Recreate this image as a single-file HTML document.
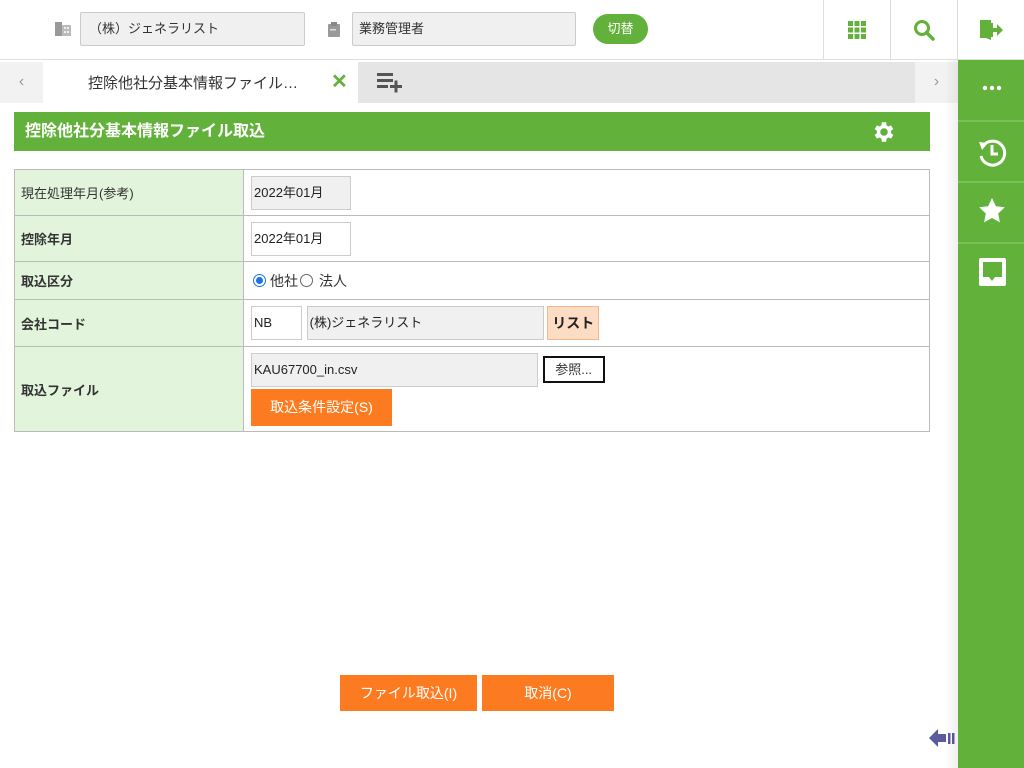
<!DOCTYPE html>
<html><head><meta charset="utf-8"><style>
*{box-sizing:border-box;margin:0;padding:0}
body{width:1024px;height:768px;position:relative;overflow:hidden;background:#fff;font-family:"Liberation Sans","Noto Sans CJK JP",sans-serif;font-size:13px;color:#333}
.a{position:absolute}
.box{position:absolute;background:#f0f0f0;border:1px solid #ccc;border-radius:2px;padding-left:8px;line-height:32px;font-size:13px;color:#333}
.g{background:#62b13a}
td{border:1px solid #bbb;vertical-align:middle}
.lb{background:#e2f4dc;padding-left:6px;font-weight:bold;font-size:13px;color:#333}
.in{display:inline-block;border:1px solid #ccc;height:34px;line-height:32px;padding-left:2px;font-size:13px;color:#222;vertical-align:middle}
.ob{position:absolute;background:#fd7b20;color:#fff;text-align:center;font-size:14px}
</style></head><body>
<div class="a" style="left:0;top:0;width:1024px;height:60px;border-bottom:1px solid #ddd;background:#fff"></div>
<svg class="a" style="left:54px;top:21px" width="18" height="16"><rect x="1" y="1" width="7" height="14" fill="#999"/><rect x="8" y="4" width="9" height="11" fill="#bbb"/><g fill="#eee"><rect x="10" y="6" width="2" height="2"/><rect x="13" y="6" width="2" height="2"/><rect x="10" y="10" width="2" height="2"/><rect x="13" y="10" width="2" height="2"/></g></svg>
<div class="box" style="left:80px;top:12px;width:225px;height:34px">（株）ジェネラリスト</div>
<svg class="a" style="left:327px;top:21px" width="14" height="17"><rect x="1" y="3" width="12" height="13" rx="1" fill="#999"/><rect x="4" y="1" width="6" height="4" fill="#888"/><rect x="3" y="8" width="6" height="1.5" fill="#ddd"/></svg>
<div class="box" style="left:352px;top:12px;width:224px;height:34px;padding-left:6px">業務管理者</div>
<div class="a g" style="left:593px;top:14px;width:55px;height:30px;border-radius:15px;color:#fff;text-align:center;line-height:30px;font-size:13px">切替</div>
<div class="a" style="left:823px;top:0;width:1px;height:60px;background:#ddd"></div>
<div class="a" style="left:890px;top:0;width:1px;height:60px;background:#ddd"></div>
<div class="a" style="left:957px;top:0;width:1px;height:60px;background:#ddd"></div>
<svg class="a" style="left:848px;top:21px" width="18" height="18" fill="#62b13a"><rect x="0" y="0" width="5" height="5"/><rect x="6.5" y="0" width="5" height="5"/><rect x="13" y="0" width="5" height="5"/><rect x="0" y="6.5" width="5" height="5"/><rect x="6.5" y="6.5" width="5" height="5"/><rect x="13" y="6.5" width="5" height="5"/><rect x="0" y="13" width="5" height="5"/><rect x="6.5" y="13" width="5" height="5"/><rect x="13" y="13" width="5" height="5"/></svg>
<svg class="a" style="left:913px;top:19px" width="22" height="22"><circle cx="9" cy="9" r="6.5" stroke="#62b13a" stroke-width="3" fill="none"/><line x1="13.5" y1="13.5" x2="20" y2="20" stroke="#62b13a" stroke-width="3.5" stroke-linecap="round"/></svg>
<svg class="a" style="left:979px;top:19px" width="24" height="22" fill="#62b13a"><path d="M1 1h11v20l-5 -2h-6z"/><rect x="11" y="4" width="3" height="14"/><path d="M13 9h5v-4l6 6-6 6v-4h-5z"/></svg>
<div class="a" style="left:0;top:62px;width:958px;height:41px;background:#e5e5e5"></div>
<div class="a" style="left:0;top:62px;width:43px;height:41px;background:#f2f2f2;color:#999;text-align:center;line-height:40px;font-size:16px">‹</div>
<div class="a" style="left:915px;top:62px;width:43px;height:41px;background:#f2f2f2;color:#999;text-align:center;line-height:40px;font-size:16px">›</div>
<div class="a" style="left:43px;top:62px;width:315px;height:41px;background:#fff"></div>
<div class="a" style="left:88px;top:72px;font-size:15px;color:#333">控除他社分基本情報ファイル…</div>
<div class="a" style="left:331px;top:69px;font-size:20px;font-weight:bold;color:#62b13a">✕</div>
<svg class="a" style="left:377px;top:73px" width="26" height="20" fill="#555"><rect x="0" y="0" width="16" height="3"/><rect x="0" y="6" width="16" height="3"/><rect x="0" y="12" width="11" height="3"/><rect x="13" y="12" width="12" height="3"/><rect x="17.5" y="7.5" width="3" height="12"/></svg>
<div class="a g" style="left:14px;top:112px;width:916px;height:39px;color:#fff;font-weight:bold;font-size:16px;line-height:39px;padding-left:11px">控除他社分基本情報ファイル取込</div>
<svg class="a" style="left:871px;top:119px" width="26" height="26" viewBox="0 0 24 24"><path fill="#fff" d="M19.4 13a7.5 7.5 0 0 0 0-2l2.1-1.6-2-3.5-2.5 1a7.5 7.5 0 0 0-1.7-1L15 3h-4l-.4 2.9a7.5 7.5 0 0 0-1.7 1l-2.5-1-2 3.5L6.5 11a7.5 7.5 0 0 0 0 2l-2.1 1.6 2 3.5 2.5-1a7.5 7.5 0 0 0 1.7 1L11 21h4l.4-2.9a7.5 7.5 0 0 0 1.7-1l2.5 1 2-3.5zM13 15.5a3.5 3.5 0 1 1 0-7 3.5 3.5 0 0 1 0 7z" transform="translate(-1 0)"/></svg>
<table class="a" style="left:14px;top:169px;width:916px;border-collapse:collapse">
<tr style="height:46px"><td class="lb" style="width:229px;font-weight:normal">現在処理年月(参考)</td><td style="padding-left:7px"><span class="in" style="width:100px;background:#f0f0f0">2022年01月</span></td></tr>
<tr style="height:46px"><td class="lb">控除年月</td><td style="padding-left:7px"><span class="in" style="width:100px">2022年01月</span></td></tr>
<tr style="height:38px"><td class="lb">取込区分</td><td style="padding-left:9px;font-size:14px"><span style="display:inline-block;width:13px;height:13px;border-radius:50%;border:1px solid #1a73e8;vertical-align:-1px;position:relative;margin-right:4px"><span style="position:absolute;left:2px;top:2px;width:7px;height:7px;border-radius:50%;background:#1a73e8"></span></span>他社<span style="display:inline-block;width:13px;height:13px;border-radius:50%;border:1px solid #666;vertical-align:-1px;margin:0 6px 0 2px"></span>法人</td></tr>
<tr style="height:47px"><td class="lb">会社コード</td><td style="padding-left:7px"><span class="in" style="width:51px">NB</span> <span class="in" style="width:237px;background:#f0f0f0;margin-left:1px">(株)ジェネラリスト</span> <span class="in" style="width:52px;background:#fddcc4;border-color:#f8b78a;font-weight:bold;font-size:14px;text-align:center;padding:0">リスト</span></td></tr>
<tr style="height:85px"><td class="lb">取込ファイル</td><td style="padding-left:7px"><div><span class="in" style="width:287px;background:#f0f0f0">KAU67700_in.csv</span> <span style="display:inline-block;border:2px solid #111;height:27px;line-height:23px;width:62px;text-align:center;font-size:13px;margin-left:1px;vertical-align:middle">参照...</span></div><div style="margin-top:2px;width:141px;height:37px;background:#fd7b20;color:#fff;font-size:14px;line-height:37px;text-align:center">取込条件設定(S)</div></td></tr>
</table>
<div class="ob" style="left:340px;top:675px;width:137px;height:36px;line-height:36px">ファイル取込(I)</div>
<div class="ob" style="left:482px;top:675px;width:132px;height:36px;line-height:36px">取消(C)</div>
<svg class="a" style="left:928px;top:727px" width="30" height="22"><path d="M1 11l9-9v5h8v8h-8v5z" fill="#5b5b9e"/><rect x="20" y="6" width="2.5" height="11" fill="#5b5b9e"/><rect x="24" y="6" width="2.5" height="11" fill="#5b5b9e"/></svg>
<div class="a" style="left:945px;top:60px;width:13px;height:708px;background:linear-gradient(to right,rgba(0,0,0,0),rgba(0,0,0,0.06))"></div>
<div class="a g" style="left:958px;top:60px;width:66px;height:708px"></div>
<div class="a" style="left:958px;top:120px;width:66px;height:2px;background:#7cc05a"></div>
<div class="a" style="left:958px;top:181px;width:66px;height:2px;background:#7cc05a"></div>
<div class="a" style="left:958px;top:242px;width:66px;height:2px;background:#7cc05a"></div>
<svg class="a" style="left:982px;top:84px" width="20" height="8" fill="#fff"><circle cx="3" cy="4" r="2.2"/><circle cx="10" cy="4" r="2.2"/><circle cx="17" cy="4" r="2.2"/></svg>
<svg class="a" style="left:976px;top:136px" width="32" height="32"><path d="M7 10A12 12 0 1 1 5 20" stroke="#fff" stroke-width="3" fill="none"/><path d="M3 6l9 1-6 7z" fill="#fff"/><path d="M16 9v9h6" stroke="#fff" stroke-width="3" fill="none"/></svg>
<svg class="a" style="left:978px;top:197px" width="28" height="27"><path d="M14 1l3.9 8.2 8.9 1.1-6.6 6.2 1.7 8.9L14 21l-7.9 4.4 1.7-8.9L1.2 10.3l8.9-1.1z" fill="#fff"/></svg>
<svg class="a" style="left:978px;top:257px" width="29" height="30"><path d="M3 1h23a2 2 0 0 1 2 2v24a2 2 0 0 1-2 2H3a2 2 0 0 1-2-2V3a2 2 0 0 1 2-2zM5 5v15h6l3 4 3-4h7V5z" fill="#fff" fill-rule="evenodd"/></svg>
</body></html>
